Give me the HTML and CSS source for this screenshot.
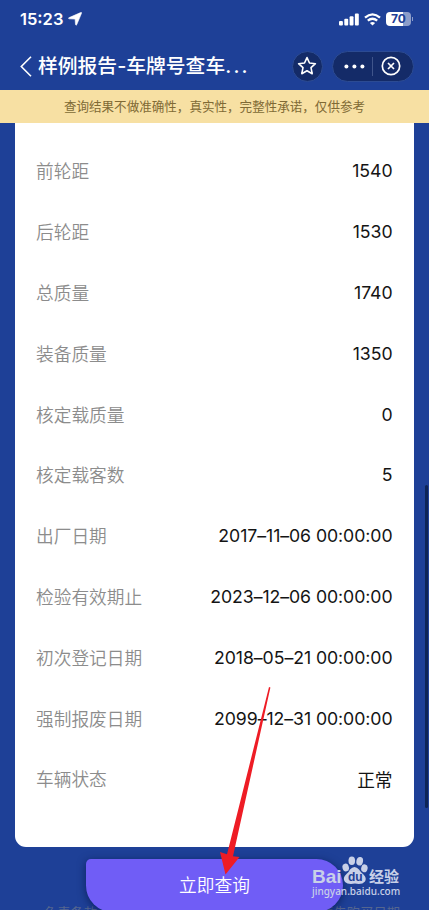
FILE: index.html
```html
<!DOCTYPE html>
<html lang="zh-CN">
<head>
<meta charset="utf-8">
<title>样例报告</title>
<link rel="stylesheet" href="styles.css">
</head>
<body>
<div class="screen">
  <header class="status">
    <div class="clock">15:23
      <svg class="loc" width="14" height="14" viewBox="0 0 14 14"><path d="M12.600 .6Q13.900 0 13.500 1.300L8.700 12.700Q8 13.900 7.500 12.500L7.100 7.100L1.300 6.800Q-.3 6.400 1.200 5.600Z" fill="#fff" stroke="#fff" stroke-width=".6"/></svg>
    </div>
    <div class="signals">
      <svg width="20" height="13" viewBox="0 0 20 13"><g fill="#fff"><rect x="0" y="8" width="3.900" height="4.500" rx="1"/><rect x="5.300" y="5.700" width="3.900" height="6.800" rx="1"/><rect x="10.600" y="3.200" width="3.900" height="9.300" rx="1"/><rect x="15.900" y=".5" width="3.900" height="12" rx="1"/></g></svg>
      <svg width="17" height="13" viewBox="0 0 17 13"><g fill="none" stroke="#fff" stroke-width="2.300"><path d="M1 4.700Q8.500 -1.900 16 4.700"/><path d="M3.800 7.700Q8.500 3.700 13.200 7.700"/></g><path d="M8.500 12.500L5.900 9.900Q8.500 7.900 11.100 9.900Z" fill="#fff"/></svg>
      <div class="battery"><span>70</span></div>
    </div>
  </header>
  <nav class="nav">
    <svg class="back" width="12" height="21" viewBox="0 0 12 21"><path d="M11 .8L1.300 10.500L11 20.200" fill="none" stroke="#fff" stroke-width="1.600"/></svg>
    <h1 class="title">样例报告-车牌号查车<span class="ellipsis">...</span></h1>
    <div class="fav">
      <svg width="20" height="20" viewBox="0 0 20 20"><path d="M10 1.600L12.500 7L18.400 7.700L14 11.700L15.200 17.700L10 14.700L4.800 17.700L6 11.700L1.600 7.700L7.500 7Z" fill="none" stroke="#fff" stroke-width="1.600" stroke-linejoin="round"/></svg>
    </div>
    <div class="capsule">
      <svg class="more" width="21" height="5" viewBox="0 0 21 5"><g fill="#fff"><circle cx="2.400" cy="2.500" r="2"/><circle cx="10.400" cy="2.500" r="2"/><circle cx="18.400" cy="2.500" r="2"/></g></svg>
      <i class="divider"></i>
      <svg class="close" width="20" height="20" viewBox="0 0 20 20"><g fill="none" stroke="#fff" stroke-width="1.700"><circle cx="10" cy="10" r="8.700"/><path d="M7 7L13 13M13 7L7 13"/></g></svg>
    </div>
  </nav>
  <div class="notice">查询结果不做准确性，真实性，完整性承诺，仅供参考</div>
  <main class="card">
    <dl class="list">
      <div class="row"><dt>前轮距</dt><dd>1540</dd></div>
      <div class="row"><dt>后轮距</dt><dd>1530</dd></div>
      <div class="row"><dt>总质量</dt><dd>1740</dd></div>
      <div class="row"><dt>装备质量</dt><dd>1350</dd></div>
      <div class="row"><dt>核定载质量</dt><dd>0</dd></div>
      <div class="row"><dt>核定载客数</dt><dd>5</dd></div>
      <div class="row"><dt>出厂日期</dt><dd>2017–11–06 00:00:00</dd></div>
      <div class="row"><dt>检验有效期止</dt><dd>2023–12–06 00:00:00</dd></div>
      <div class="row"><dt>初次登记日期</dt><dd>2018–05–21 00:00:00</dd></div>
      <div class="row"><dt>强制报废日期</dt><dd>2099–12–31 00:00:00</dd></div>
      <div class="row"><dt>车辆状态</dt><dd>正常</dd></div>
    </dl>
  </main>
  <footer class="terms"><span>免责条款</span><span>请先购买日期</span></footer>
  <div class="scrollbar"></div>
  <button class="submit">立即查询</button>
  <svg class="arrow" width="52" height="190" viewBox="0 0 52 190"><path d="M50 1L51.400 1.500L14 170.200L20.500 171L6.500 188.500L1 166L8 168.300Z" fill="#ee1c25"/></svg>
  <div class="watermark">
    <div class="brand"><span class="bai">Bai</span><svg class="paw" width="26" height="29" viewBox="0 0 26 29"><g fill="#c8d0e8"><ellipse cx="3.700" cy="11.500" rx="3.200" ry="4" transform="rotate(-15 3.700 11.500)"/><ellipse cx="9.800" cy="4.800" rx="3.300" ry="4.300"/><ellipse cx="17.700" cy="5.200" rx="3.300" ry="4.300" transform="rotate(12 17.700 5.200)"/><ellipse cx="22.400" cy="12.300" rx="3.200" ry="4" transform="rotate(12 22.400 12.300)"/><path d="M8 13.500Q12.500 8.500 17 13.500Q18.500 16 21.500 18.500Q25 22 23 25.500Q20 29 13 27.600Q6 29 3 26Q0 22 4.500 18Q7 16 8 13.500Z"/></g></svg><span class="du">du</span><span class="jy">经验</span></div>
    <div class="url">jingyan.baidu.com</div>
  </div>
</div>
</body>
</html>
```
FILE: styles.css
```css
* { box-sizing: border-box; }
body { margin: 0; font-family: Inter, "Noto Sans CJK SC", sans-serif; }
.screen {
  position: relative;
  width: 429px;
  height: 910px;
  overflow: hidden;
  background: #1e4097;
}
.status {
  display: flex;
  justify-content: space-between;
  height: 38px;
  padding: 0 18px 0 20px;
  color: #fff;
}
.clock {
  display: flex;
  align-items: center;
  gap: 5px;
  font-size: 16.5px;
  font-weight: 600;
}
.signals { display: flex; align-items: center; gap: 5px; }
.battery {
  position: relative;
  width: 25px;
  height: 14px;
  border-radius: 4px;
  background: linear-gradient(90deg, #fff 70%, #8c9dca 70%);
  color: #1e4097;
  font-size: 12px;
  font-weight: 700;
  line-height: 14px;
  text-align: center;
}
.battery::after {
  content: "";
  position: absolute;
  left: 26px;
  top: 5px;
  width: 1px;
  height: 4px;
  background: #8c9dca;
}
.nav {
  display: flex;
  align-items: center;
  height: 52px;
  padding: 4px 15px 0 20px;
}
.back { flex: none; margin-right: 6px; }
.title {
  flex: none;
  width: 253.500px;
  margin: 0;
  color: #fff;
  font-size: 19.800px;
  font-weight: 500;
  line-height: 30px;
  white-space: nowrap;
}
.ellipsis { letter-spacing: 2.200px; }
.fav, .capsule {
  display: flex;
  align-items: center;
  height: 31px;
  border: 1px solid #2c4b93;
  border-radius: 16px;
  background: #142b68;
}
.fav { flex: none; width: 31px; justify-content: center; margin-right: 9px; }
.capsule { flex: none; width: 82px; padding-left: 11px; }
.divider { width: 1px; height: 19px; margin: 0 8px 0 7px; background: #40558b; }
.notice {
  height: 33px;
  background: #f7e0a3;
  color: #806a35;
  font-family: "Noto Sans CJK SC", sans-serif;
  font-size: 12.550px;
  line-height: 31px;
  text-align: center;
}
.card {
  width: 399px;
  height: 724px;
  margin-left: 15px;
  padding: 17.600px 21px 0;
  border-radius: 0 0 11px 11px;
  background: #fff;
}
.list { margin: 0; }
.row {
  display: flex;
  align-items: center;
  justify-content: space-between;
  height: 60.800px;
}
dt {
  padding-bottom: 1px;
  color: #8c8c8c;
  font-family: "Noto Sans CJK SC", sans-serif;
  font-size: 17.700px;
  font-weight: 350;
}
dd { margin: 0; color: #141414; font-size: 17.700px; letter-spacing: -.07px; padding-right: .5px; }
.terms {
  display: flex;
  justify-content: space-between;
  margin-top: 56px;
  padding: 0 29px 0 44px;
  color: #55668f;
  font-size: 13.300px;
  line-height: 20px;
}
.scrollbar {
  position: absolute;
  left: 425px;
  top: 485px;
  width: 3px;
  height: 323px;
  border-radius: 2px;
  background: #0e2557;
}
.submit {
  position: absolute;
  left: 86px;
  top: 859px;
  width: 257px;
  height: 53px;
  padding: 0 0 3px;
  border: 0;
  border-radius: 5px 27px 27px 27px;
  background: #705df6;
  box-shadow: 0 2px 8px rgba(5, 18, 65, .65);
  color: #fff;
  font-family: "Noto Sans CJK SC", sans-serif;
  font-size: 17.700px;
  font-weight: 350;
  line-height: 50px;
}
.arrow { position: absolute; left: 219px; top: 686px; }
.watermark { position: absolute; left: 312px; top: 856px; width: 90px; color: #c8d0e8; }
.brand { display: flex; height: 29px; position: relative; }
.bai { flex: none; width: 30px; padding-top: 9px; font: 700 19px/24px "Liberation Sans", sans-serif; }
.paw { flex: none; }
.du {
  position: absolute;
  left: 36px;
  top: 14px;
  color: #1e4097;
  font: 700 12px/14px "Liberation Sans", sans-serif;
}
.jy { margin-left: 1px; padding-top: 9px; font: 700 15px/22px "Noto Sans CJK SC", sans-serif; }
.url { margin-top: -1px; font: 500 10px/14px "Noto Sans", sans-serif; }
```
